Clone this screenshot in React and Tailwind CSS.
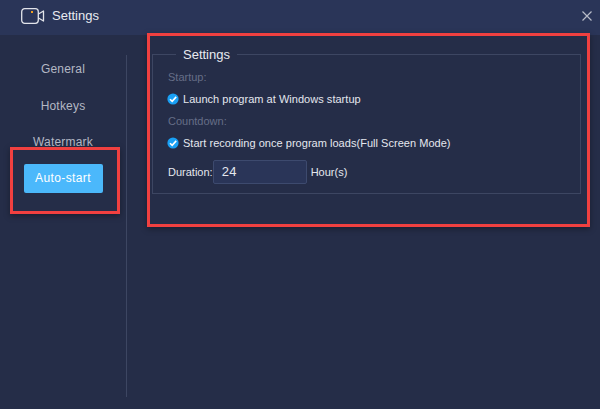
const navItems = ["General", "Hotkeys", "Watermark"];

function CheckRow({ label }) {
  return (
    <div className="flex items-center h-[20px] text-[#e4e7ee] text-[11px] tracking-[0.03px]">
      <svg width="12" height="12" viewBox="0 0 12 12" className="ml-[14px] mr-[4px] shrink-0">
        <circle cx="6" cy="6" r="5.6" fill="#19a0f5" />
        <path d="M3 6.2 L5.2 8.4 L9.2 3.9" fill="none" stroke="#fff" strokeWidth="1.6" />
      </svg>
      {label}
    </div>
  );
}

function App() {
  return (
    <div className="relative w-[600px] h-[409px] overflow-hidden bg-[#252d48] font-['Liberation_Sans',sans-serif]">
      <div className="flex items-center h-[35px] pb-[4px] bg-[#2a3558] text-[#e8eaf0] text-[13px]">
        <svg width="24" height="16" viewBox="0 0 24 16" className="ml-[21px] mr-[7px]" fill="none">
          <rect x="0.7" y="0.7" width="16.6" height="14.6" rx="3" stroke="#e2e4ea" strokeWidth="1.3" />
          <path d="M17.5 6 L22.5 3 V13 L17.5 10" stroke="#e2e4ea" strokeWidth="1.3" strokeLinejoin="round" />
          <rect x="10" y="3" width="2" height="2" fill="#f0a020" />
        </svg>
        Settings
        <svg width="10" height="10" viewBox="0 0 10 10" className="ml-auto mr-[8px]" fill="none">
          <path d="M0.5 0.5 L9.5 9.5 M9.5 0.5 L0.5 9.5" stroke="#b8bcc8" strokeWidth="1.2" />
        </svg>
      </div>

      <div className="flex">
        <div className="w-[127px] h-[374px] pt-[20px] pb-[12px]">
          <div className="h-full border-r border-[#3d4662] flex flex-col items-center">
            {navItems.map((item) => (
              <div key={item} className="h-[36.5px] pt-[5px] text-[12px] tracking-[0.2px] text-[#b4b8c4]">
                {item}
              </div>
            ))}
            <button className="mt-[-1px] w-[79px] h-[29px] rounded-[2px] bg-[#4bb8fb] text-white text-[12px] tracking-[0.4px]">
              Auto-start
            </button>
          </div>
        </div>

        <div className="pl-[25px] pt-[12px]">
          <fieldset className="w-[429px] h-[147px] border border-[#3d4662] pl-[15px]">
            <legend className="ml-[8px] px-[7px] text-[13px] leading-[15px] text-[#e8eaf0]">Settings</legend>
            <div className="h-[20px] flex items-center text-[11px] text-[#656d87] mt-[5px]">Startup:</div>
            <div className="-ml-[15px] mt-[2px]"><CheckRow label="Launch program at Windows startup" /></div>
            <div className="h-[20px] flex items-center text-[11px] text-[#656d87] mt-[2px]">Countdown:</div>
            <div className="-ml-[15px] mt-[2px]"><CheckRow label="Start recording once program loads(Full Screen Mode)" /></div>
            <div className="flex items-center mt-[7px] text-[11px] text-[#e4e7ee]">
              Duration:
              <div className="mr-[4px] w-[94px] h-[24px] flex items-center pl-[8px] bg-[#2a3558] border border-[#3d4a6e] rounded-[2px] text-[13px] tracking-[0.5px]">
                24
              </div>
              Hour(s)
            </div>
          </fieldset>
        </div>
      </div>

      <div className="absolute left-[10px] top-[147px] w-[110px] h-[67px] border-[3px] border-[#f04040] shadow-[0_2px_6px_rgba(0,0,0,0.35)]" />
      <div className="absolute left-[147px] top-[33px] w-[443px] h-[194px] border-[3px] border-[#f04040] shadow-[0_2px_6px_rgba(0,0,0,0.35)]" />
    </div>
  );
}

export default App;
